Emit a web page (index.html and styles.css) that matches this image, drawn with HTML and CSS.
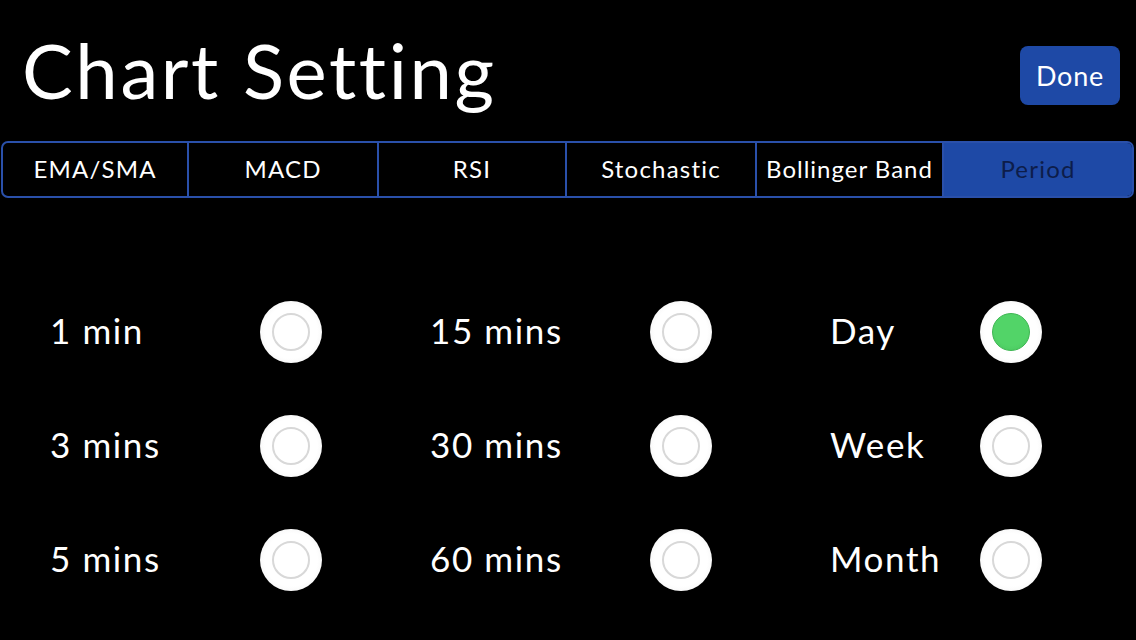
FILE: index.html
```html
<!DOCTYPE html>
<html>
<head>
<meta charset="utf-8">
<link rel="stylesheet" href="styles.css">
</head>
<body>
<div class="page">
  <header class="header">
    <h1 class="title">Chart Setting</h1>
    <button class="done">Done</button>
  </header>
  <nav class="tabs">
    <div class="tab">EMA/SMA</div>
    <div class="tab">MACD</div>
    <div class="tab">RSI</div>
    <div class="tab">Stochastic</div>
    <div class="tab">Bollinger Band</div>
    <div class="tab active">Period</div>
  </nav>
  <section class="options">
    <div class="opt c1"><span class="label">1 min</span><span class="radio"></span></div>
    <div class="opt c2"><span class="label">15 mins</span><span class="radio"></span></div>
    <div class="opt c3"><span class="label">Day</span><span class="radio on"></span></div>
    <div class="opt c1"><span class="label">3 mins</span><span class="radio"></span></div>
    <div class="opt c2"><span class="label">30 mins</span><span class="radio"></span></div>
    <div class="opt c3"><span class="label">Week</span><span class="radio"></span></div>
    <div class="opt c1"><span class="label">5 mins</span><span class="radio"></span></div>
    <div class="opt c2"><span class="label">60 mins</span><span class="radio"></span></div>
    <div class="opt c3"><span class="label">Month</span><span class="radio"></span></div>
  </section>
</div>
</body>
</html>
```

FILE: styles.css
```css
html, body {
  margin: 0;
  padding: 0;
  background: #000;
}
body {
  width: 1136px;
  height: 640px;
  overflow: hidden;
  font-family: Lato, "Open Sans", sans-serif;
  color: #fff;
}
.header {
  display: flex;
  justify-content: space-between;
  align-items: flex-start;
  height: 141px;
  padding: 0 16px 0 22px;
  box-sizing: border-box;
}
.title {
  margin: 0;
  font-weight: 400;
  font-size: 76px;
  line-height: 1;
  padding-top: 32px;
  letter-spacing: 2.6px;
}
.done {
  margin-top: 46px;
  width: 100px;
  height: 59px;
  border: none;
  border-radius: 8px;
  background: #1e49a6;
  color: #fff;
  font-family: inherit;
  font-size: 27px;
  letter-spacing: 0.8px;
  padding: 0;
}
.tabs {
  display: flex;
  margin: 0 2px 0 1px;
  height: 57px;
  border: 2px solid #2a50aa;
  border-radius: 7px;
  box-sizing: border-box;
  overflow: hidden;
}
.tab {
  flex: 1;
  display: flex;
  align-items: center;
  justify-content: center;
  font-size: 24px;
  border-right: 2px solid #2a50aa;
  white-space: nowrap;
  letter-spacing: 1.2px;
  padding-bottom: 2px;
}
.tab:nth-child(1) { flex: 0 0 184px; }
.tab:nth-child(2) { flex: 0 0 188px; }
.tab:nth-child(3) { flex: 0 0 186px; }
.tab:nth-child(4) { flex: 0 0 188px; }
.tab:nth-child(5) { flex: 0 0 185px; letter-spacing: 1px; }
.tab:last-child {
  border-right: none;
}
.tab.active {
  background: #1e49a6;
  color: #0d1d4a;
}
.options {
  display: grid;
  grid-template-columns: 380px 400px 1fr;
  row-gap: 52px;
  padding: 103px 0 0 50px;
}
.opt {
  display: flex;
  align-items: center;
  height: 62px;
}
.opt.c1 .label {
  width: 210px;
}
.opt.c2 .label {
  width: 220px;
}
.opt.c3 .label {
  width: 150px;
}
.label {
  font-size: 35px;
  letter-spacing: 1.6px;
  padding-bottom: 5px;
}
.radio {
  position: relative;
  width: 62px;
  height: 62px;
  border-radius: 50%;
  background: radial-gradient(circle, #fff 60%, #f2f2f2 85%, #d6d6d6 100%);
  box-sizing: border-box;
}
.radio::after {
  content: "";
  position: absolute;
  left: 12px;
  top: 12px;
  width: 38px;
  height: 38px;
  border-radius: 50%;
  box-sizing: border-box;
  border: 2px solid #d8d8d8;
  background: #fff;
}
.radio.on::after {
  border: 1px solid #3cb651;
  background: radial-gradient(circle at 50% 40%, #52d468 60%, #46c35b 100%);
}
```
